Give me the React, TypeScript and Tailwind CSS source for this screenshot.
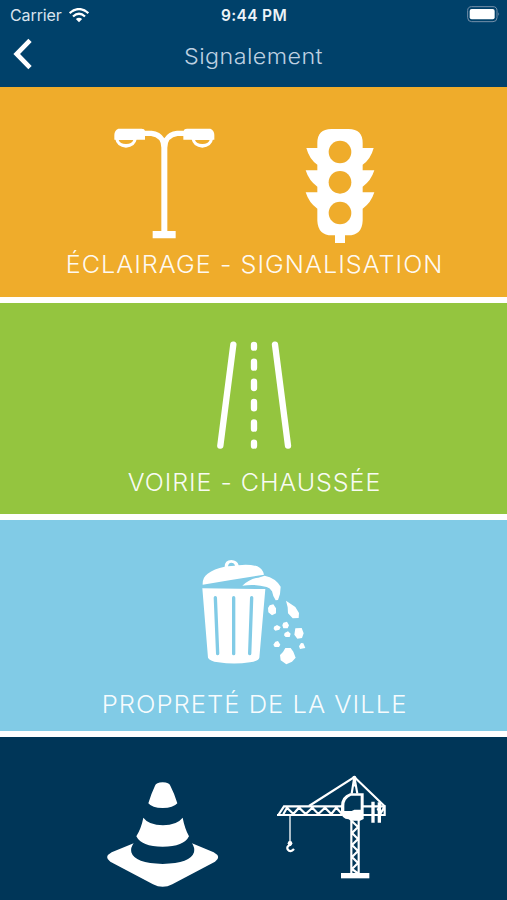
import type { ReactNode } from "react";

function StatusBar() {
  return (
    <div className="flex h-[30px] items-center justify-between pl-[10px] pr-[7px] text-white">
      <div className="flex w-[119px] items-center gap-[7px]">
        <span className="text-[16px] leading-[30px] tracking-[-0.1px] text-[#d9e4ee]">Carrier</span>
        <svg width="20" height="15" viewBox="0 0 60 45" fill="none" stroke="#fff" strokeWidth="7">
          <path d="M2 15.500Q30 -9 58 15.500" />
          <path d="M12 25.500Q30 9.500 48 25.500" />
          <path d="M20.500 33Q30 25 39.500 33L30 42.500Z" fill="#fff" stroke="none" />
        </svg>
      </div>
      <span className="pt-[1px] text-[15.500px] font-semibold leading-[30px] tracking-[0.35px] text-[#edf3f8]">9:44 PM</span>
      <div className="flex w-[121px] justify-end">
        <svg width="33" height="17" viewBox="0 0 99 51" className="-mt-[2px]">
          <rect x="2" y="2" width="88" height="45" rx="12" fill="none" stroke="#7590aa" strokeWidth="3" />
          <rect x="8" y="9" width="75" height="31" rx="6" fill="#fff" />
          <path d="M94 19Q99 24 94 30Z" fill="#7590aa" />
        </svg>
      </div>
    </div>
  );
}

function LampIcon() {
  return (
    <svg width="120" height="135" viewBox="0 0 360 405" fill="#fff">
      <path d="M40 41H110Q119 41 120 47H140Q166 49 178 70Q190 49 216 47H236Q237 41 246 41H316Q328 46 328 60V74H235V63H218Q187 67 187 98V348H212V370H143V348H169V98Q169 67 138 63H120V74H28V60Q28 46 40 41Z" />
      <path d="M30 70Q35 97 63 98Q91 97 96 70ZM259 70Q264 97 292 98Q320 97 325 70Z" />
      <path d="M41 75H85Q81 87 63 87Q45 87 41 75ZM270 75H314Q310 87 292 87Q274 87 270 75Z" fill="#efac2b" />
    </svg>
  );
}

function TrafficLightIcon() {
  return (
    <svg width="100" height="135" viewBox="0 0 300 405" fill="#fff">
      <path d="M82 84Q82 42 124 42H176Q218 42 218 84V99H251Q242 133 218 149V166H253Q243 198 218 215V232H253Q243 264 218 281V317Q216 361 174 361H165V384H135V361H126Q84 361 82 317V281Q57 264 47 232H82V215Q57 198 47 166H82V149Q58 133 49 99H82Z" />
      <g fill="#efac2b">
        <circle cx="150" cy="111" r="34" />
        <circle cx="150" cy="202" r="34" />
        <circle cx="150" cy="294" r="34" />
      </g>
    </svg>
  );
}

function RoadIcon() {
  return (
    <svg width="100" height="130" viewBox="0 0 300 390" stroke="#fff" strokeWidth="19" strokeLinecap="round">
      <path d="M85 44L46 347M210 44L249 347" />
      <path d="M147 45V53M147 95V113M147 155V174M147 216V235M147 277V296M147 338V347" />
    </svg>
  );
}

function TrashIcon() {
  return (
    <svg width="130" height="125" viewBox="0 0 390 375" fill="#fff">
      <path d="M38 104Q37 82 53 71Q72 56 104 50Q104 31 124 30Q142 31 146 46Q175 42 202 49Q218 56 222 74Q130 88 38 104ZM114 49L135 47Q133 38 124 38Q115 39 114 49Z" fillRule="evenodd" />
      <path d="M37 115L226 117L208 323Q205 333 180 337Q132 344 85 337Q58 333 54 323Z" />
      <path d="M76 143L83 311M131 143V311M185 143L179 311" stroke="#81cbe6" strokeWidth="10" strokeLinecap="round" />
      <path d="M157 107Q180 86 205 83L224 77Q257 84 272 110L270 132L264 150L257 151Q249 141 246 124Q240 114 230 111Q195 101 157 107Z" />
      <path d="M288 152L316 171L327 189L326 204L308 205L294 190L293 172ZM239 166L250 163L258 175V190L246 196L235 187L234 174ZM280 218L291 215L297 226L293 235L280 235L277 226ZM252 230L261 225L272 231L268 239L256 242L251 237ZM284 249L294 244L302 251L299 261L287 261L282 256ZM316 235L335 234L341 250L336 264L322 266L313 254ZM256 275L264 273L271 284L267 291L254 291L250 284ZM333 279L340 280L346 294L330 297L327 289ZM286 294H302L310 305L317 323L306 335L289 343L272 331L270 315L279 306Z" />
    </svg>
  );
}

function ConeIcon() {
  return (
    <svg width="130" height="160" viewBox="0 45 390 480" fill="#fff">
      <path d="M165 182Q168 173 188 172Q208 173 211 182Q224 207 232 235Q220 249 188 249Q156 249 145 235Q153 207 165 182Z" />
      <path d="M130 278Q146 300 189 301Q231 300 248 278Q254 310 267 334Q252 365 188 365Q124 365 109 334Q124 309 130 278Z" />
      <path d="M101 355Q91 368 94 382Q104 415 188 417Q272 415 282 382Q285 368 276 355L341 382Q366 396 345 410L217 478Q188 493 159 478L31 410Q10 396 35 382Z" />
    </svg>
  );
}

function CraneIcon() {
  return (
    <svg width="135" height="135" viewBox="0 0 405 405" fill="none" stroke="#fff" strokeWidth="6.5">
      <path d="M40 150L57 124H232M36 150H232M55 148L66 128L85 147L102 128L122 147L142 128L160 147L180 128L199 147L214 128L231 147" />
      <path d="M132 123L268 36L359 124M260 86L268 36L277 86M263 61H274" />
      <circle cx="268" cy="38" r="6" fill="#fff" stroke="none" />
      <path d="M292 124H359V150H292M337 130L347 145L357 128" />
      <path d="M324 110V173M343 112V173" strokeWidth="10" />
      <path d="M75 151V232" strokeWidth="4" />
      <path d="M75 230V240Q64 244 68 253Q76 264 87 252" strokeWidth="7" />
      <circle cx="75" cy="235" r="7" fill="#fff" stroke="none" />
      <path d="M296 85H255Q228 94 228 124V142Q230 162 251 163L257 167H285L296 162ZM287 92V134H268L260 138H238V122Q238 101 258 92Z" fill="#fff" fillRule="evenodd" stroke="none" />
      <path d="M259 164V326M281 164V326M261 169L279 186L261 204L279 222L261 240L279 258L261 276L279 294L261 312L279 325" />
      <path d="M228 324H313V340H228Z" fill="#fff" stroke="none" />
    </svg>
  );
}

function Label({ children, className }: { children: ReactNode; className: string }) {
  return (
    <h2 className={`whitespace-nowrap pl-[2px] text-center text-[23.500px] font-light leading-[28px] text-white/95 ${className}`}>
      {children}
    </h2>
  );
}

export default function App() {
  return (
    <div className="flex h-[900px] w-[507px] flex-col overflow-hidden bg-white font-['Inter',sans-serif]">
      <header className="h-[87px] shrink-0 bg-[#00416a]">
        <StatusBar />
        <div className="grid h-[50px] grid-cols-[60px_1fr_60px] items-center">
          <svg width="20" height="32" viewBox="0 0 60 96" className="-mt-[2px] ml-[12px]" fill="none" stroke="#fff" strokeWidth="14">
            <path d="M54 7L14 48L54 89" />
          </svg>
          <h1 className="scale-x-[1.06] pt-[1px] text-center text-[22px] font-light leading-[30px] tracking-[0.4px] text-[#bdd0e1]">
            Signalement
          </h1>
        </div>
      </header>
      <main className="flex flex-col gap-[6px]">
        <section className="h-[210px] bg-[#efac2b] pt-[28px]">
          <div className="flex gap-[65px] pl-[105px]">
            <LampIcon />
            <TrafficLightIcon />
          </div>
          <Label className="mt-[1px] scale-x-[1.072] tracking-[0.95px]">ÉCLAIRAGE - SIGNALISATION</Label>
        </section>
        <section className="h-[211px] bg-[#94c53f] pt-[27px]">
          <div className="flex pl-[205px]">
            <RoadIcon />
          </div>
          <Label className="mt-[9px] scale-x-[1.065] tracking-[0.9px]">VOIRIE - CHAUSSÉE</Label>
        </section>
        <section className="h-[211px] bg-[#81cbe6] pt-[30px]">
          <div className="flex pl-[190px]">
            <TrashIcon />
          </div>
          <Label className="mt-[16px] scale-x-[1.09] tracking-[0.9px]">PROPRETÉ DE LA VILLE</Label>
        </section>
        <section className="h-[163px] bg-[#003658] pt-[3px]">
          <div className="flex items-end gap-[35px] pl-[100px]">
            <ConeIcon />
            <CraneIcon />
          </div>
        </section>
      </main>
    </div>
  );
}
